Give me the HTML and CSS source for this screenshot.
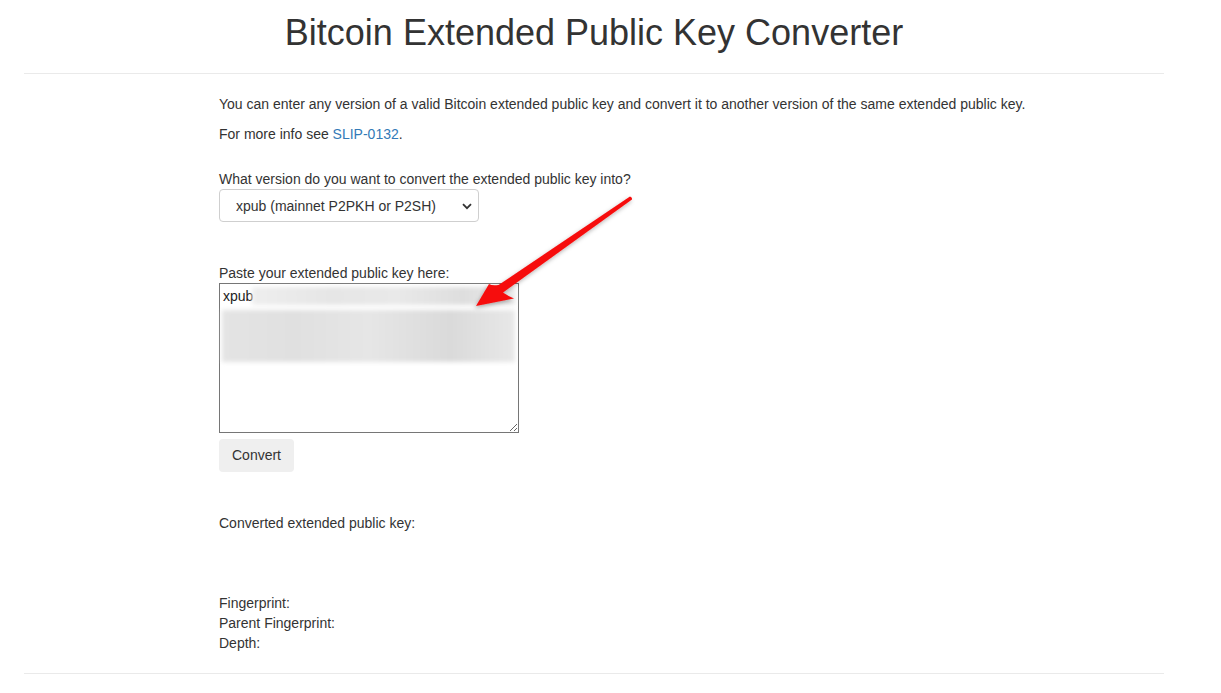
FILE: index.html
```html
<!DOCTYPE html>
<html lang="en">
<head>
<meta charset="utf-8">
<title>Bitcoin Extended Public Key Converter</title>
<link rel="stylesheet" href="styles.css">
</head>
<body>
<div class="page">
  <h1 class="title">Bitcoin Extended Public Key Converter</h1>
  <hr class="rule">
  <main class="content">
    <p class="text">You can enter any version of a valid Bitcoin extended public key and convert it to another version of the same extended public key.</p>
    <p class="text">For more info see <a class="link" href="#">SLIP-0132</a>.</p>

    <div class="field field-version">
      <label class="label" for="version">What version do you want to convert the extended public key into?</label>
      <div class="select-wrap">
        <select class="select" id="version">
          <option>xpub (mainnet P2PKH or P2SH)</option>
        </select>
        <svg class="chevron" width="10" height="7" viewBox="0 0 10 7"><path d="M1 1.2 L5 5.2 L9 1.2" fill="none" stroke="#333" stroke-width="1.8"/></svg>
      </div>
    </div>

    <div class="field field-key">
      <label class="label" for="key">Paste your extended public key here:</label>
      <div class="ta-wrap">
        <textarea class="textarea" id="key">xpub</textarea>
        <div class="blur blur-1"></div>
        <div class="blur blur-2"></div>
      </div>
      <div class="actions"><button class="btn" type="button">Convert</button></div>
    </div>

    <div class="result">Converted extended public key:</div>

    <div class="meta">
      <div>Fingerprint:</div>
      <div>Parent Fingerprint:</div>
      <div>Depth:</div>
    </div>
  </main>
  <hr class="rule rule-bottom">

  <svg class="arrow" width="190" height="130" viewBox="0 0 190 130">
    <defs>
      <filter id="sh" x="-20%" y="-20%" width="140%" height="150%">
        <feDropShadow dx="-1" dy="2" stdDeviation="2" flood-color="#000" flood-opacity="0.3"/>
      </filter>
    </defs>
    <path d="M24 116 L37 94 Q40 96 46.5 95 L178 6.5 Q180.5 7.5 180 9.5 L51 102.5 Q56 106 62 108.5 Z" fill="#f60d0d" filter="url(#sh)"/>
  </svg>
</div>
</body>
</html>
```

FILE: styles.css
```css
* { box-sizing: border-box; }
html, body {
  margin: 0;
  padding: 0;
  background: #fff;
}
body {
  font-family: "Liberation Sans", Arial, Helvetica, sans-serif;
  font-size: 14px;
  line-height: 20px;
  color: #333;
}
.page {
  position: relative;
  width: 1140px;
  margin-left: 24px;
}
.title {
  margin: 0;
  padding-top: 12px;
  font-size: 36px;
  line-height: 41px;
  font-weight: 400;
  text-align: center;
  color: #333;
}
.rule {
  margin: 20px 0 20px;
  border: 0;
  border-top: 1px solid #eaeaea;
  height: 0;
}
.rule-bottom {
  margin: 20px 0 0;
}
.content {
  padding-left: 195px;
}
.text {
  margin: 0 0 10px;
}
.link {
  color: #337ab7;
  text-decoration: none;
}
.field-version {
  margin-top: 25px;
}
.label {
  display: block;
  font-weight: 400;
}
.select-wrap {
  position: relative;
  width: 260px;
  height: 33px;
}
.select {
  appearance: none;
  -webkit-appearance: none;
  width: 260px;
  height: 33px;
  padding: 0 0 0 16px;
  border: 1px solid #cfcfcf;
  border-radius: 4px;
  background: #fff;
  font-family: "Liberation Sans", Arial, sans-serif;
  font-size: 14px;
  color: #333;
}
.chevron {
  position: absolute;
  right: 7px;
  top: 14px;
  pointer-events: none;
}
.field-key {
  margin-top: 41px;
}
.ta-wrap {
  position: relative;
  width: 300px;
  height: 150px;
}
.textarea {
  display: block;
  width: 300px;
  height: 150px;
  margin: 0;
  padding: 2px 3px;
  border: 1px solid #767676;
  border-radius: 0;
  font-family: "Liberation Sans", Arial, sans-serif;
  font-size: 14px;
  line-height: 20px;
  color: #222;
  resize: both;
}
.blur {
  position: absolute;
  pointer-events: none;
  filter: blur(2px);
}
.blur-1 {
  left: 33px;
  top: 4px;
  width: 263px;
  height: 18px;
  background: linear-gradient(90deg, #eeeeee 0%, #e6e6e6 30%, #e9e9e9 55%, #dedede 80%, #eaeaea 100%);
}
.blur-2 {
  left: 3px;
  top: 27px;
  width: 293px;
  height: 52px;
  background: linear-gradient(90deg, #e4e4e4 0%, #e0e0e0 25%, #e6e6e6 50%, #dadada 78%, #e8e8e8 100%);
}
.actions {
  margin-top: 6px;
}
.btn {
  width: 75px;
  height: 33px;
  border: 0;
  border-radius: 4px;
  background: #efefef;
  font-family: "Liberation Sans", Arial, sans-serif;
  font-size: 14px;
  line-height: 31px;
  color: #333;
  padding: 0;
}
.result {
  margin-top: 41px;
}
.meta {
  margin-top: 60px;
}
.arrow {
  position: absolute;
  left: 428px;
  top: 190px;
  pointer-events: none;
}
```
